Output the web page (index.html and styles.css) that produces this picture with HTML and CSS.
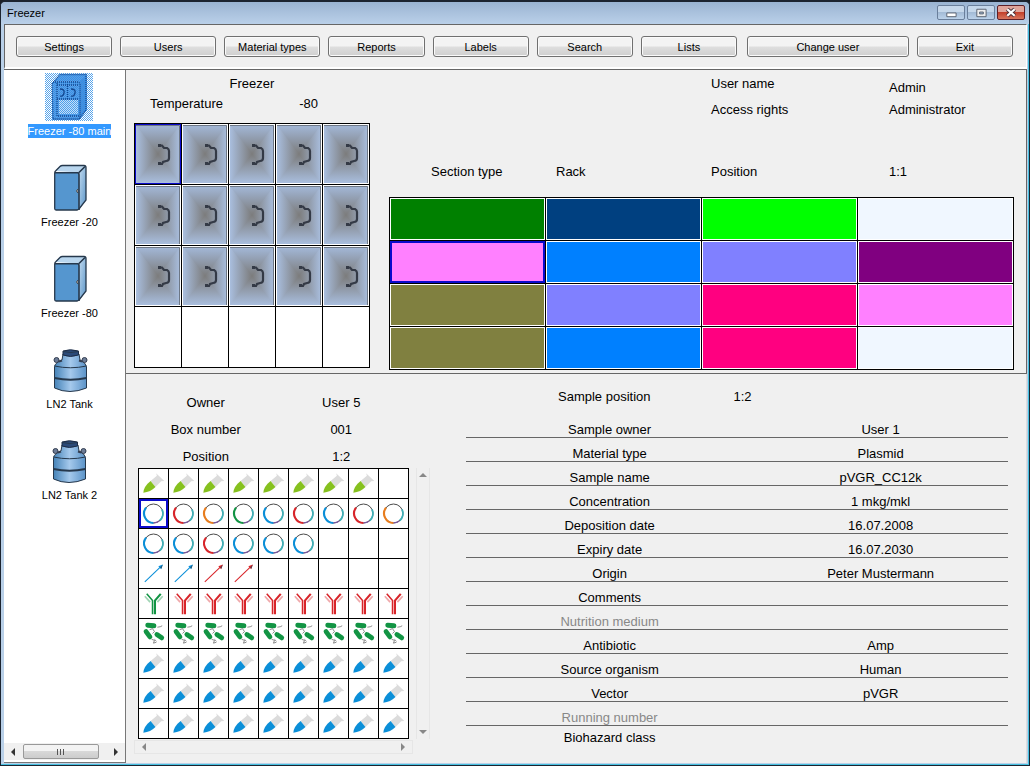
FILE: index.html
```html
<!DOCTYPE html>
<html lang="en">
<head>
<meta charset="utf-8">
<title>Freezer</title>
<link rel="stylesheet" href="styles.css">
</head>
<body>
<svg class="sprites" aria-hidden="true">
  <defs>
    <linearGradient id="gx"><stop offset="0" stop-color="#a9bede"/><stop offset=".5" stop-color="#7c7c7c"/><stop offset="1" stop-color="#a9bede"/></linearGradient>
    <linearGradient id="gy" x2="0" y2="1"><stop offset="0" stop-color="#a3b8d8"/><stop offset="1" stop-color="#7c7c7c"/></linearGradient>
    <linearGradient id="gz" x2="0" y2="1"><stop offset="0" stop-color="#7c7c7c"/><stop offset="1" stop-color="#a9bede"/></linearGradient>
    <linearGradient id="steel"><stop offset="0" stop-color="#4583b8"/><stop offset=".5" stop-color="#a5c9ec"/><stop offset="1" stop-color="#5b93c8"/></linearGradient>
    <linearGradient id="side" x2="1" y2="1"><stop offset="0" stop-color="#c4dcf0"/><stop offset="1" stop-color="#5b95c8"/></linearGradient>
    <pattern id="dots" width="2" height="2" patternUnits="userSpaceOnUse"><path d="M0 0h1v1H0zM1 1h1v1H1z" fill="#2f8fe6"/></pattern>
  </defs>
  <symbol id="door" viewBox="0 0 44 58" preserveAspectRatio="none">
    <path d="M0 0h44v58H0z" fill="url(#gx)"/>
    <path d="M0 0h44L22 29z" fill="url(#gy)"/>
    <path d="M0 58h44L22 29z" fill="url(#gz)"/>
    <path d="M0 .5h43.500V58" fill="none" stroke="#6d7785"/>
    <path d="M22 20.500h4l2 2.500h3q2 1 2 3v7q0 3-3 3l-3 1-1 2h-4" fill="none" stroke="#343a46" stroke-width="2.200"/>
    <path d="M22 19h3v3h-3zM22 37h3v3h-3z" fill="#343a46"/>
  </symbol>
  <symbol id="tube" viewBox="0 0 30 30">
    <path d="M12 12.500 18.500 7l-.8-2.500 8.500 8-3.200.2-6 6z" fill="#dcdcdc"/>
    <path d="M4.500 24.500Q5 18 12 12.500l5 6.200Q12 24 4.500 24.500z" fill="currentColor"/>
  </symbol>
  <symbol id="ring" viewBox="0 0 30 30">
    <g fill="none">
      <circle cx="15" cy="15" r="9.800" stroke="#444" stroke-width="1"/>
      <path d="M7.300 9A9.800 9.800 0 0 0 15 24.800" stroke="currentColor" stroke-width="2.200"/>
      <path d="M15 24.800A9.800 9.800 0 0 0 21 22.800" stroke="#7a589c" stroke-width="1.300"/>
      <path d="M21.500 22.300A9.800 9.800 0 0 0 23.800 10.800" stroke="#3fb0b8" stroke-width="2"/>
    </g>
  </symbol>
  <symbol id="arrow" viewBox="0 0 30 30">
    <path d="M6 23.700 22 8.300" stroke="currentColor" stroke-width="1.100" fill="none"/>
    <path d="M24.700 5.700 20 7.500l3 3z" fill="currentColor"/>
    <path d="M24.700 5.700 22 9l1 1z" fill="#345"/>
  </symbol>
  <symbol id="antibody" viewBox="0 0 30 30">
    <g fill="none" stroke="currentColor">
      <path d="M8 5l6 7v14" stroke-width="1.600"/>
      <path d="M22.500 5l-6 7v14" stroke-width="2.200"/>
      <path d="M6 7.500l5.500 6M24.500 7.500l-5.500 6" stroke-width="1.800" opacity=".4"/>
    </g>
  </symbol>
  <symbol id="bacteria" viewBox="0 0 30 30">
    <g fill="none" stroke="#129444" stroke-linecap="round" stroke-width="5">
      <path d="M9 6.500l6.500 .5M7.300 13l4 5.500M18.500 16l5 3.500"/>
    </g>
    <path d="M19 8.500l3-.5 2-1M11 11l3-1 2 3M13 21l3 1-1 3 3-1M14 15l2-2M16 21l2 2" fill="none" stroke="#555" stroke-width=".7"/>
  </symbol>
  <symbol id="freezer" viewBox="0 0 48 48">
    <path d="M10 7 15 1.500h26l-7 7z" fill="#b9d6ee"/>
    <path d="M34 8.500 41 1.500V36l-7 10z" fill="url(#side)"/>
    <path d="M10 8h24v38H10z" fill="#5596cf"/>
    <path d="M9.700 9Q9.700 7.500 11 6.500l4-4Q16 1.500 17.500 1.500H39q2 0 2 2V36l-7 9-2 1H11q-1.300 0-1.300-1.500z" fill="none" stroke="#26384c" stroke-width="1.300"/>
    <path d="M10 8.700h22.500q1.500 0 1.500 2V46M34 8.500l6-6" fill="none" stroke="#26384c" stroke-width="1.600"/>
    <path d="M33 25q-3 2 0 4" fill="#bbb" stroke="#444"/>
  </symbol>
  <symbol id="tank" viewBox="0 -2 48 48">
    <path d="M8.500 18.500Q9 15 16 12l1-6h16l1 6q6 3 6.500 6.500V40Q32 43.500 24 43.500T8.500 40z" fill="url(#steel)" stroke="#26384c"/>
    <path d="M17 3v4q7 3 15.500 0V3Q24 .5 17 3z" fill="#2b4a78" stroke="#1d2c45"/>
    <path d="M17 3.500q8 2 15.500 0M8.500 18q16 3.500 32 0" fill="none" stroke="#26384c"/>
    <path d="M8.500 30q16 3.500 32 0" fill="none" stroke="#26384c" stroke-width="2"/>
    <circle cx="10.500" cy="12" r="2.500" fill="#6b7b96" stroke="#333d50"/><circle cx="38.500" cy="12" r="2.500" fill="#6b7b96" stroke="#333d50"/>
    <path d="M13 13.500l3-1M36 13.500l-3-1" stroke="#333d50" stroke-width="2"/>
  </symbol>
  <symbol id="freezer-main" viewBox="0 0 48 48">
    <path d="M7 10 15 1h27v36l-8 10H7z" fill="#5e9fe6"/>
    <path d="M35 8l7-6v34l-7 10z" fill="#4a8edb"/>
    <path d="M14 27h19v14H14z" fill="#c5def8"/>
    <path d="M0 0h48v48H0z" fill="url(#dots)" opacity=".8"/>
    <g fill="none" stroke="#12468f" stroke-width="1.300">
      <path d="M7 11 15 1.500h26V37l-7 9H8zM8 9h24q3 0 3 3v34M12 10v33h22M12 26h22M22.500 11v15M12 12h22" stroke-dasharray="1 1"/>
      <path d="M15 16q5 0 4 4t-4 3M26 16q5 0 4 4t-4 3"/>
    </g>
  </symbol>
</svg>

<div class="window">
  <header class="titlebar">
    <h1>Freezer</h1>
    <div class="caption">
      <button type="button" aria-label="Minimize"><svg viewBox="0 0 28 14"><path d="M9.500 7.500h10v4h-10z" fill="#fff" stroke="#555e6c"/></svg></button>
      <button type="button" aria-label="Maximize"><svg viewBox="0 0 28 14"><path d="M9.500 3.500h10v8h-10z" fill="#eee" stroke="#555e6c"/><path d="M12.500 6.500h4v2h-4z" fill="#9db6d3" stroke="#555e6c"/></svg></button>
      <button type="button" class="close" aria-label="Close"><svg viewBox="0 0 28 14"><path d="M10 3.500l8 7M18 3.500l-8 7" stroke="#4a3038" stroke-width="4.500"/><path d="M10 3.500l8 7M18 3.500l-8 7" stroke="#fff" stroke-width="2.500"/></svg></button>
    </div>
  </header>
  <nav class="toolbar">
    <button type="button">Settings</button><button type="button">Users</button><button type="button">Material types</button><button type="button">Reports</button><button type="button">Labels</button><button type="button">Search</button><button type="button">Lists</button><button type="button" class="wide">Change user</button><button type="button">Exit</button>
  </nav>
  <div class="body">
    <aside class="sidebar">
      <div class="devices">
        <button type="button" class="device active"><svg><use href="#freezer-main"/></svg><span>Freezer -80 main</span></button>
        <button type="button" class="device"><svg><use href="#freezer"/></svg><span>Freezer -20</span></button>
        <button type="button" class="device"><svg><use href="#freezer"/></svg><span>Freezer -80</span></button>
        <button type="button" class="device"><svg><use href="#tank"/></svg><span>LN2 Tank</span></button>
        <button type="button" class="device"><svg><use href="#tank"/></svg><span>LN2 Tank 2</span></button>
      </div>
      <div class="scroll">
        <button type="button" class="left" aria-label="Scroll left"></button>
        <div class="track"><div class="thumb"></div></div>
        <button type="button" class="right" aria-label="Scroll right"></button>
      </div>
    </aside>
    <main class="main">
      <section class="storage">
        <div class="unit">
          <h2>Freezer</h2>
          <p class="temp"><span>Temperature</span><span>-80</span></p>
          <table class="doors">
            <tr><td><button type="button" class="on" aria-label="1:1"><svg><use href="#door"/></svg></button></td><td><button type="button" aria-label="1:2"><svg><use href="#door"/></svg></button></td><td><button type="button" aria-label="1:3"><svg><use href="#door"/></svg></button></td><td><button type="button" aria-label="1:4"><svg><use href="#door"/></svg></button></td><td><button type="button" aria-label="1:5"><svg><use href="#door"/></svg></button></td></tr>
            <tr><td><button type="button" aria-label="2:1"><svg><use href="#door"/></svg></button></td><td><button type="button" aria-label="2:2"><svg><use href="#door"/></svg></button></td><td><button type="button" aria-label="2:3"><svg><use href="#door"/></svg></button></td><td><button type="button" aria-label="2:4"><svg><use href="#door"/></svg></button></td><td><button type="button" aria-label="2:5"><svg><use href="#door"/></svg></button></td></tr>
            <tr><td><button type="button" aria-label="3:1"><svg><use href="#door"/></svg></button></td><td><button type="button" aria-label="3:2"><svg><use href="#door"/></svg></button></td><td><button type="button" aria-label="3:3"><svg><use href="#door"/></svg></button></td><td><button type="button" aria-label="3:4"><svg><use href="#door"/></svg></button></td><td><button type="button" aria-label="3:5"><svg><use href="#door"/></svg></button></td></tr>
            <tr><td></td><td></td><td></td><td></td><td></td></tr>
          </table>
        </div>
        <div class="racks">
          <div class="info">
            <span class="user">User name</span><span>Admin</span>
            <span class="rights">Access rights</span><span>Administrator</span>
            <span class="type">Section type</span><span>Rack</span><span>Position</span><span>1:1</span>
          </div>
          <table class="sections">
            <tr><td><button type="button" class="green" aria-label="Rack 1:1"></button></td><td><button type="button" class="navy" aria-label="Rack 1:2"></button></td><td><button type="button" class="lime" aria-label="Rack 1:3"></button></td><td><button type="button" class="pale" aria-label="Rack 1:4"></button></td></tr>
            <tr><td><button type="button" class="pink on" aria-label="Rack 2:1"></button></td><td><button type="button" class="azure" aria-label="Rack 2:2"></button></td><td><button type="button" class="lilac" aria-label="Rack 2:3"></button></td><td><button type="button" class="purple" aria-label="Rack 2:4"></button></td></tr>
            <tr><td><button type="button" class="olive" aria-label="Rack 3:1"></button></td><td><button type="button" class="lilac" aria-label="Rack 3:2"></button></td><td><button type="button" class="rose" aria-label="Rack 3:3"></button></td><td><button type="button" class="pink" aria-label="Rack 3:4"></button></td></tr>
            <tr><td><button type="button" class="olive" aria-label="Rack 4:1"></button></td><td><button type="button" class="azure" aria-label="Rack 4:2"></button></td><td><button type="button" class="rose" aria-label="Rack 4:3"></button></td><td><button type="button" class="pale" aria-label="Rack 4:4"></button></td></tr>
          </table>
        </div>
      </section>
      <section class="contents">
        <div class="box">
          <div class="boxinfo"><span>Owner</span><span>User 5</span><span>Box number</span><span>001</span><span>Position</span><span>1:2</span></div>
          <table class="samples">
            <tr class="g"><td><svg><use href="#tube"/></svg></td><td><svg><use href="#tube"/></svg></td><td><svg><use href="#tube"/></svg></td><td><svg><use href="#tube"/></svg></td><td><svg><use href="#tube"/></svg></td><td><svg><use href="#tube"/></svg></td><td><svg><use href="#tube"/></svg></td><td><svg><use href="#tube"/></svg></td><td></td></tr>
            <tr class="b"><td><svg class="on"><use href="#ring"/></svg></td><td class="r"><svg><use href="#ring"/></svg></td><td class="o"><svg><use href="#ring"/></svg></td><td class="d"><svg><use href="#ring"/></svg></td><td><svg><use href="#ring"/></svg></td><td class="r"><svg><use href="#ring"/></svg></td><td><svg><use href="#ring"/></svg></td><td class="r"><svg><use href="#ring"/></svg></td><td class="o"><svg><use href="#ring"/></svg></td></tr>
            <tr class="b"><td><svg><use href="#ring"/></svg></td><td><svg><use href="#ring"/></svg></td><td class="r"><svg><use href="#ring"/></svg></td><td><svg><use href="#ring"/></svg></td><td><svg><use href="#ring"/></svg></td><td><svg><use href="#ring"/></svg></td><td></td><td></td><td></td></tr>
            <tr class="b"><td><svg><use href="#arrow"/></svg></td><td><svg><use href="#arrow"/></svg></td><td class="r"><svg><use href="#arrow"/></svg></td><td class="r"><svg><use href="#arrow"/></svg></td><td></td><td></td><td></td><td></td><td></td></tr>
            <tr class="r"><td class="d"><svg><use href="#antibody"/></svg></td><td><svg><use href="#antibody"/></svg></td><td><svg><use href="#antibody"/></svg></td><td><svg><use href="#antibody"/></svg></td><td><svg><use href="#antibody"/></svg></td><td><svg><use href="#antibody"/></svg></td><td><svg><use href="#antibody"/></svg></td><td><svg><use href="#antibody"/></svg></td><td><svg><use href="#antibody"/></svg></td></tr>
            <tr><td><svg><use href="#bacteria"/></svg></td><td><svg><use href="#bacteria"/></svg></td><td><svg><use href="#bacteria"/></svg></td><td><svg><use href="#bacteria"/></svg></td><td><svg><use href="#bacteria"/></svg></td><td><svg><use href="#bacteria"/></svg></td><td><svg><use href="#bacteria"/></svg></td><td><svg><use href="#bacteria"/></svg></td><td><svg><use href="#bacteria"/></svg></td></tr>
            <tr class="b"><td><svg><use href="#tube"/></svg></td><td><svg><use href="#tube"/></svg></td><td><svg><use href="#tube"/></svg></td><td><svg><use href="#tube"/></svg></td><td><svg><use href="#tube"/></svg></td><td><svg><use href="#tube"/></svg></td><td><svg><use href="#tube"/></svg></td><td><svg><use href="#tube"/></svg></td><td><svg><use href="#tube"/></svg></td></tr>
            <tr class="b"><td><svg><use href="#tube"/></svg></td><td><svg><use href="#tube"/></svg></td><td><svg><use href="#tube"/></svg></td><td><svg><use href="#tube"/></svg></td><td><svg><use href="#tube"/></svg></td><td><svg><use href="#tube"/></svg></td><td><svg><use href="#tube"/></svg></td><td><svg><use href="#tube"/></svg></td><td><svg><use href="#tube"/></svg></td></tr>
            <tr class="b"><td><svg><use href="#tube"/></svg></td><td><svg><use href="#tube"/></svg></td><td><svg><use href="#tube"/></svg></td><td><svg><use href="#tube"/></svg></td><td><svg><use href="#tube"/></svg></td><td><svg><use href="#tube"/></svg></td><td><svg><use href="#tube"/></svg></td><td><svg><use href="#tube"/></svg></td><td><svg><use href="#tube"/></svg></td></tr>
          </table>
          <div class="vbar"><button type="button" class="up" aria-label="Scroll up"></button><button type="button" class="down" aria-label="Scroll down"></button></div>
          <div class="hbar"><button type="button" class="left" aria-label="Scroll left"></button><button type="button" class="right" aria-label="Scroll right"></button></div>
        </div>
        <div class="sample">
          <p class="place"><span>Sample position</span><span>1:2</span></p>
          <table class="details">
            <tr><th scope="row">Sample owner</th><td>User 1</td></tr>
            <tr><th scope="row">Material type</th><td>Plasmid</td></tr>
            <tr><th scope="row">Sample name</th><td>pVGR_CC12k</td></tr>
            <tr><th scope="row">Concentration</th><td>1 mkg/mkl</td></tr>
            <tr><th scope="row">Deposition date</th><td>16.07.2008</td></tr>
            <tr><th scope="row">Expiry date</th><td>16.07.2030</td></tr>
            <tr><th scope="row">Origin</th><td>Peter Mustermann</td></tr>
            <tr><th scope="row">Comments</th><td></td></tr>
            <tr class="off"><th scope="row">Nutrition medium</th><td></td></tr>
            <tr><th scope="row">Antibiotic</th><td>Amp</td></tr>
            <tr><th scope="row">Source organism</th><td>Human</td></tr>
            <tr><th scope="row">Vector</th><td>pVGR</td></tr>
            <tr class="off"><th scope="row">Running number</th><td></td></tr>
            <tr><th scope="row">Biohazard class</th><td></td></tr>
          </table>
        </div>
      </section>
    </main>
  </div>
</div>
</body>
</html>
```
FILE: styles.css
```css
* { box-sizing: border-box; }
body { margin: 0; font: 13px/16px "Liberation Sans", Arial, sans-serif; color: #000; background: #1b1f26; }
button { font: inherit; color: inherit; margin: 0; padding: 0; border: 0; background: none; }
h1, h2, p { margin: 0; font-size: inherit; font-weight: normal; }
table { border-collapse: collapse; }
td, th { padding: 0; font-weight: normal; }
svg { display: block; }
.sprites { position: absolute; width: 0; height: 0; }

.window { display: flex; flex-direction: column; min-height: 100vh; padding: 0 2px 2px 3px; border: 1px solid #1c2430; border-top-width: 2px; border-radius: 6px 6px 0 0; background: #b9d0e8; box-shadow: inset -1px -1px #45c0e0; }

.titlebar { display: flex; justify-content: space-between; align-items: flex-start; height: 22px; margin: 0 -2px 0 -3px; padding: 3px 4px 0 6px; border-radius: 4px 4px 0 0; background: linear-gradient(#9ab4d2, #bad0e9); font-size: 11px; }
.caption { display: flex; gap: 2px; }
.caption button { width: 28px; height: 15px; border: 1px solid #6a7f9b; border-radius: 2px; background: linear-gradient(#c5d7ea 45%, #a3bbd6 50%, #bcd2ea); }
.caption svg { width: 26px; height: 13px; }
.caption .close { border-color: #5e2028; background: linear-gradient(#e0a59b 45%, #c3412c 50%, #d8765e); }

.toolbar { display: flex; gap: 8px; padding: 11px 13px 10px 11px; border: 1px solid #666; border-right-color: #fff; border-bottom: 2px solid #fff; background: #f0f0f0; font-size: 11px; }
.toolbar button { flex: 96 1 0; height: 21px; border: 1px solid #707070; border-radius: 3px; background: linear-gradient(#f3f3f3 48%, #dedede 52%, #cfcfcf); box-shadow: inset 0 0 0 1px #fafafa; white-space: nowrap; }
.toolbar .wide { flex-grow: 163; margin-left: 2px; }

.body { display: flex; flex: 1; background: #f0f0f0; border-top: 1px solid #666; }
.sidebar { display: flex; flex-direction: column; flex: none; width: 122px; padding-bottom: 2px; border: solid #777; border-width: 0 1px 1px 0; background: #fff; }
.devices { display: flex; flex: 1; flex-direction: column; align-items: center; gap: 26px; padding: 3px 0 0 10px; font-size: 11px; line-height: 14px; }
.device { display: flex; flex-direction: column; align-items: center; gap: 3px; }
.device svg { width: 48px; height: 48px; }
.device span { white-space: nowrap; }
.active span { background: #3399ff; color: #fff; }

.scroll { display: flex; align-items: center; height: 17px; background: #f0f0f0; }
.scroll button, .hbar button, .vbar button { display: grid; place-items: center; width: 18px; height: 14px; }
.left::before, .right::before, .up::before, .down::before { content: ""; border: 4px solid transparent; color: #333; }
.left::before { border-right: 4px solid; border-left: 0; }
.right::before { border-left: 4px solid; border-right: 0; }
.up::before { border-bottom: 4px solid; border-top: 0; }
.down::before { border-top: 4px solid; border-bottom: 0; }
.track { flex: 1; padding: 0 8px 0 1px; }
.thumb { height: 15px; border: 1px solid #999; border-radius: 2px; background: repeating-linear-gradient(90deg, #555 0 1px, transparent 1px 3px) center / 8px 6px no-repeat, linear-gradient(#f3f3f3 45%, #d8d8d8 50%, #ccc); }

.main { display: flex; flex: 1; flex-direction: column; min-width: 0; }
.storage { display: flex; gap: 19px; padding: 6px 12px 3px 8px; border: solid #666; border-width: 0 1px 1px 0; }
.unit { width: 236px; }
.unit h2 { text-align: center; }
.temp { display: flex; justify-content: space-between; margin: 4px 0 11px; padding: 0 52px 0 16px; }
.doors td, .sections td, .samples td { border: 1px solid #000; background: #fff; }
.doors { width: 100%; table-layout: fixed; }
.doors td { height: 61px; }
.doors button { display: block; width: 100%; height: 60px; padding: 1px; }
.doors svg { width: 100%; height: 58px; }
.doors .on, .sections .on, .samples .on { box-shadow: 0 0 0 1px #0a0acc, inset 0 0 0 2px #0a0acc; }

.racks { flex: 1; min-width: 0; }
.info { display: grid; grid-template-columns: 42fr 125fr 155fr 178fr 125fr; grid-template-rows: 20px 28px 56px; align-items: end; padding-bottom: 17px; white-space: nowrap; }
.user, .rights { grid-column: 4; }
.user { align-self: start; }
.rights, .rights + span { align-self: center; }
.type { grid-column: 2; }
.sections { width: 100%; table-layout: fixed; }
.sections td { height: 43px; padding: 1px; }
.sections td:has(.on) { padding: 0; }
.sections button { display: block; width: 100%; height: 40px; }
.sections .on { height: 42px; }
.green { background: #008000; }
.navy { background: #004080; }
.lime { background: #00ff00; }
.pale { background: #f0f7ff; }
.pink { background: #ff80ff; }
.azure { background: #0080ff; }
.lilac { background: #8080ff; }
.purple { background: #800080; }
.olive { background: #808040; }
.rose { background: #ff0080; }

.contents { display: flex; flex: 1; gap: 36px; padding: 0 18px 0 12px; border-right: 1px solid #ddd; }
.box { display: grid; grid-template-columns: 271px 14px; grid-template-rows: auto auto 15px; column-gap: 7px; align-content: start; padding-top: 21px; }
.boxinfo { display: grid; grid-template-columns: 1fr 1fr; gap: 11px 0; padding-bottom: 3px; text-align: center; }
.samples { grid-column: 1; width: 271px; table-layout: fixed; }
.samples td { height: 30px; }
.samples svg { width: 29px; height: 29px; }
.vbar { display: flex; flex-direction: column; justify-content: space-between; align-items: center; border: solid #e6e6e6; border-width: 0 1px; }
.hbar { display: flex; justify-content: space-between; align-items: center; margin: 1px -4px 0; border: 1px solid #e6e6e6; }
.hbar ::before, .vbar ::before { color: #888; }
.g { color: #86c11f; }
.b { color: #0b8fd8; }
.r { color: #d8252a; }
.o { color: #e87d1e; }
.d { color: #129444; }

.sample { flex: 1; padding-top: 15px; }
.place { display: flex; gap: 83px; margin-bottom: 8px; padding-left: 92px; }
.details { width: 100%; table-layout: fixed; text-align: center; line-height: 14px; }
.details th { width: 53%; }
.details th, .details td { height: 24px; vertical-align: bottom; border-bottom: 1px solid #666; }
.details tr:last-child > * { height: 20px; border: 0; }
.off { color: #888; }
```
